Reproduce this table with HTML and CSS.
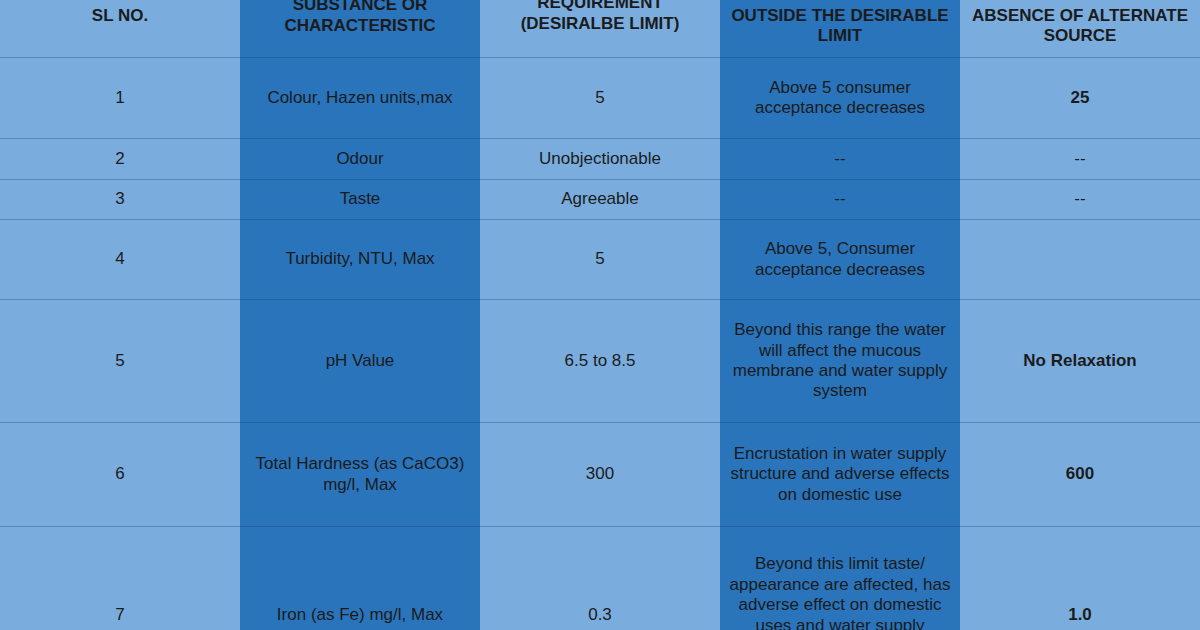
FILE: index.html
```html
<!DOCTYPE html>
<html>
<head>
<meta charset="utf-8">
<link rel="stylesheet" href="styles.css">
</head>
<body>
<table class="grid">
  <colgroup>
    <col class="c-light"><col class="c-dark"><col class="c-light"><col class="c-dark"><col class="c-light">
  </colgroup>
  <thead>
    <tr class="r-head">
      <th class="light">SL NO.</th>
      <th class="dark">SUBSTANCE OR<br>CHARACTERISTIC</th>
      <th class="light req">REQUIREMENT<br>(DESIRALBE LIMIT)</th>
      <th class="dark">UNDESIRABLE EFFECT<br>OUTSIDE THE DESIRABLE<br>LIMIT</th>
      <th class="light">PERMISSIBLE LIMIT IN THE<br>ABSENCE OF ALTERNATE<br>SOURCE</th>
    </tr>
  </thead>
  <tbody>
    <tr class="r1">
      <td class="light">1</td>
      <td class="dark">Colour, Hazen units,max</td>
      <td class="light">5</td>
      <td class="dark">Above 5 consumer acceptance decreases</td>
      <td class="light strong">25</td>
    </tr>
    <tr class="r2">
      <td class="light">2</td>
      <td class="dark">Odour</td>
      <td class="light">Unobjectionable</td>
      <td class="dark">--</td>
      <td class="light">--</td>
    </tr>
    <tr class="r3">
      <td class="light">3</td>
      <td class="dark">Taste</td>
      <td class="light">Agreeable</td>
      <td class="dark">--</td>
      <td class="light">--</td>
    </tr>
    <tr class="r4">
      <td class="light">4</td>
      <td class="dark">Turbidity, NTU, Max</td>
      <td class="light">5</td>
      <td class="dark">Above 5, Consumer acceptance decreases</td>
      <td class="light"></td>
    </tr>
    <tr class="r5">
      <td class="light">5</td>
      <td class="dark">pH Value</td>
      <td class="light">6.5 to 8.5</td>
      <td class="dark">Beyond this range the water will affect the mucous membrane and water supply system</td>
      <td class="light strong">No Relaxation</td>
    </tr>
    <tr class="r6">
      <td class="light">6</td>
      <td class="dark">Total Hardness (as CaCO3) mg/l, Max</td>
      <td class="light">300</td>
      <td class="dark">Encrustation in water supply structure and adverse effects on domestic use</td>
      <td class="light strong">600</td>
    </tr>
    <tr class="r7">
      <td class="light">7</td>
      <td class="dark">Iron (as Fe) mg/l, Max</td>
      <td class="light">0.3</td>
      <td class="dark">Beyond this limit taste/ appearance are affected, has adverse effect on domestic uses and water supply structures, and promotes iron bacteria</td>
      <td class="light strong">1.0</td>
    </tr>
  </tbody>
</table>
</body>
</html>
```

FILE: styles.css
```css
html, body {
  margin: 0;
  padding: 0;
  width: 1200px;
  height: 630px;
  overflow: hidden;
  background: #7aadde;
}

.grid {
  width: 1200px;
  table-layout: fixed;
  border-collapse: collapse;
  margin-top: -25px;
  font-family: "Liberation Sans", Arial, sans-serif;
  font-size: 17px;
  line-height: 20.4px;
  color: #1b1b1b;
}

.grid col {
  width: 240px;
}

.grid th,
.grid td {
  padding: 1px 8px 0;
  text-align: center;
  vertical-align: middle;
  border-bottom: 1px solid #5687bb;
}

.grid th {
  font-weight: bold;
  padding: 0 2px;
  white-space: nowrap;
}

.grid .light {
  background: #7aadde;
}

.grid .dark {
  background: #2974bb;
  border-bottom-color: #24629f;
}

.grid .strong {
  font-weight: bold;
}

.grid .req {
  padding-bottom: 4px;
}

.r-head { height: 82px; }
.r1 { height: 81px; }
.r2 { height: 41px; }
.r3 { height: 40px; }
.r4 { height: 80px; }
.r5 { height: 123px; }
.r6 { height: 104px; }
.r7 { height: 178px; }
```
